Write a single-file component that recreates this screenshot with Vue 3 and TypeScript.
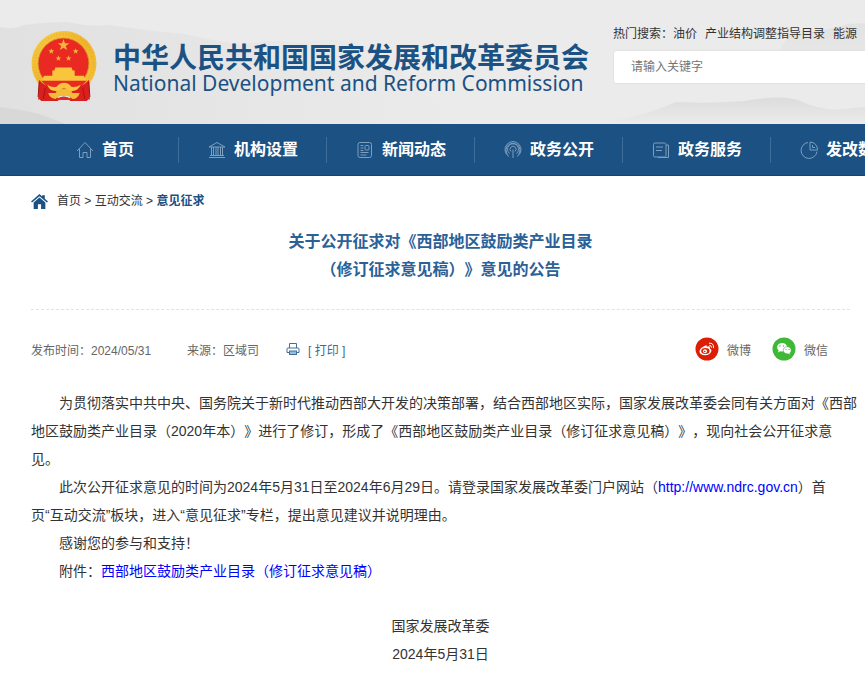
<script setup lang="ts">
import { ref } from 'vue'

interface NavItem {
  label: string
  icon: 'home' | 'bank' | 'news' | 'signal' | 'form' | 'pie'
}

const keyword = ref('')

const hotWords: string[] = ['油价', '产业结构调整指导目录', '能源', '新能源']

const navItems: NavItem[] = [
  { label: '首页', icon: 'home' },
  { label: '机构设置', icon: 'bank' },
  { label: '新闻动态', icon: 'news' },
  { label: '政务公开', icon: 'signal' },
  { label: '政务服务', icon: 'form' },
  { label: '发改数据', icon: 'pie' },
]

const star = (cx: number, cy: number, r: number): string =>
  Array.from({ length: 10 }, (_, i) => {
    const radius = i % 2 ? r * 0.4 : r
    const a = (Math.PI * i) / 5 - Math.PI / 2
    return `${(cx + radius * Math.cos(a)).toFixed(2)},${(cy + radius * Math.sin(a)).toFixed(2)}`
  }).join(' ')

const stars: string[] = [
  star(32, 14, 6),
  star(20, 20, 3),
  star(44, 20, 3),
  star(27, 27, 3),
  star(37, 27, 3),
]

const printPage = (): void => window.print()
</script>

<template>
  <div class="page">
    <header class="header">
      <svg class="hills" viewBox="0 0 865 124" preserveAspectRatio="none" aria-hidden="true">
        <defs>
          <linearGradient id="hill" x1="0" y1="0" x2="0" y2="1">
            <stop offset="0" stop-color="#dcdcdc" />
            <stop offset="1" stop-color="#ebebeb" />
          </linearGradient>
          <linearGradient id="far" x1="0" y1="0" x2="1" y2="0">
            <stop offset="0" stop-color="#dedede" />
            <stop offset="1" stop-color="#ebebeb" />
          </linearGradient>
        </defs>
        <path d="M0 27 Q14 30 24 25 Q45 22 68 22 Q88 27 110 25 Q150 31 185 34 Q220 42 245 45 Q270 38 300 43 Q340 34 375 50 L460 124 L0 124Z" fill="url(#far)" opacity=".8" />
        <path d="M0 107 Q26 110 42 115 L66 124 L0 124Z" fill="#d6d6d6" opacity=".8" />
        <path d="M790 34 Q830 30 848 24 L865 23 L865 80 L760 80Z" fill="url(#hill)" opacity=".6" />
        <path d="M616 120 Q650 114 676 102 Q710 104 745 101 Q785 94 800 101 Q825 112 844 109 L865 107 L865 124 L610 124Z" fill="url(#hill)" />
      </svg>

      <a class="brand" href="#">
        <svg class="emblem" viewBox="0 0 65 69" aria-hidden="true">
          <defs>
            <linearGradient id="gold" x1="0" y1="0" x2="1" y2="1">
              <stop offset="0" stop-color="#f8cf4a" />
              <stop offset=".5" stop-color="#efb52c" />
              <stop offset="1" stop-color="#f6c63c" />
            </linearGradient>
          </defs>
          <circle cx="32.5" cy="32" r="32" fill="url(#gold)" />
          <circle cx="32.5" cy="32" r="29" fill="none" stroke="#dd9b20" stroke-width="3" stroke-dasharray="1 2" opacity=".35" />
          <circle cx="32" cy="32" r="25" fill="#ea2a22" stroke="#d99022" stroke-width=".8" />
          <g fill="#f0b63a"><polygon v-for="(points, i) in stars" :key="i" :points="points" /></g>
          <path d="M24 36h16l1 3h-18zM21 39h22v5h9l3 6H9l4-6h8z" fill="#f8c53c" />
          <path d="M10 49h45l-6 6H16z" fill="#ea2a22" />
          <path d="M8 48q5 7 16 8l3 13H10q-2-3-3-1zM57 48q-5 7-16 8l-3 13h17q2-3 3-1z" fill="#d9201d" />
          <path d="M8 50L7 65M14 56l-2 11M57 50l1 15M51 56l2 11" stroke="#a51517" fill="none" />
          <path d="M16 53q8 5 11 0 2-2 5.500-2t5.500 2q3 5 11 0-3 7-10 6l-6.500-3-6.500 3q-8 1-10-6z" fill="#f7c541" />
          <path d="M24 61q8-6 17 0l7 0q-2 6-7 6l-4-3h-9l-4 3q-6-1-7-6z" fill="#f2bb38" />
          <path d="M25 67q7-5 15 0v1H25z" fill="#e32a20" />
        </svg>
        <span class="brand-text">
          <span class="brand-cn">中华人民共和国国家发展和改革委员会</span>
          <span class="brand-en" lang="en">National Development and Reform Commission</span>
        </span>
      </a>

      <form class="search" role="search" @submit.prevent>
        <p class="hot">
          <span>热门搜索：</span>
          <a v-for="word in hotWords" :key="word" href="#">{{ word }}</a>
        </p>
        <input v-model="keyword" type="text" placeholder="请输入关键字" aria-label="请输入关键字" />
      </form>
    </header>

    <nav class="nav">
      <a v-for="item in navItems" :key="item.label" class="nav-item" href="#">
        <svg class="nav-icon" viewBox="0 0 18 18" aria-hidden="true">
          <g v-if="item.icon === 'home'">
            <path d="M1 10L9 1.500L17 10M3.500 8v8.500h3.500v-5h4v5h3.500V8" />
          </g>
          <g v-else-if="item.icon === 'bank'">
            <path d="M1 6L9 1.500L17 6zM1 16.500h16M2 14.500h14M3.500 6v8M5.500 6v8M8 6v8M10 6v8M12.500 6v8M14.500 6v8" />
          </g>
          <g v-else-if="item.icon === 'news'">
            <rect x="2" y="1.500" width="13.500" height="15" rx="2" />
            <path d="M4.500 4.500h3M4.500 7h3M4.500 9.500h3M4.500 11.500h8M4.500 14h6" />
            <rect x="9" y="4.500" width="4" height="4.500" rx="1" />
          </g>
          <g v-else-if="item.icon === 'signal'">
            <path d="M5 15.500a8 8 0 1 1 8 0M5.500 12.500a5.500 5.500 0 1 1 7 0M7 10.500a3 3 0 1 1 4 0M9 8.500v8.500M3.500 13.500a7 7 0 1 1 11 0" />
          </g>
          <g v-else-if="item.icon === 'form'">
            <rect x="1.500" y="2" width="12.500" height="14" rx="1.500" />
            <path d="M4 6h7M4 9.500h6M14 4h2.500v12.500H6" />
          </g>
          <g v-else>
            <path d="M8 1.500a8 8 0 1 0 9 9M10 1v8h7.500M10 1a7.500 7.500 0 0 1 7.500 8M12.500 4v2.500H15" />
          </g>
        </svg>
        <span>{{ item.label }}</span>
      </a>
    </nav>

    <main class="main">
      <div class="crumbs">
        <svg class="crumb-icon" viewBox="0 0 16 14" aria-hidden="true">
          <path d="M0 7L8 0l2.500 2.200V1h2.500v3.400L16 7l-1 1L8 2 1 8z" />
          <path d="M2.500 8L8 3.300 13.500 8v6h-4V9.500h-3V14h-4z" />
        </svg>
        <span><a href="#">首页</a> &gt; <a href="#">互动交流</a> &gt; <a class="current" href="#">意见征求</a></span>
      </div>

      <h1 class="title">关于公开征求对《西部地区鼓励类产业目录<br />（修订征求意见稿）》意见的公告</h1>

      <div class="meta">
        <span>发布时间：2024/05/31</span>
        <span class="source">来源：区域司</span>
        <button class="print" type="button" @click="printPage">
          <svg viewBox="0 0 14 14" aria-hidden="true">
            <path d="M3.500 6V1.500h7V6M3 10.500H1V7q0-1 1-1h10q1 0 1 1v3.500h-2" />
            <rect x="3.500" y="9" width="7" height="3.500" fill="#9dbbd5" />
          </svg>
          <span>[ 打印 ]</span>
        </button>
        <a class="share weibo" href="#">
          <svg viewBox="0 0 24 24" aria-hidden="true">
            <circle cx="12" cy="12" r="11.500" fill="#dc1e05" />
            <path d="M10.500 8.500q1.500-.6 1.300 1.200 3-1 3.200.8l-.2 1q2.200.7 1.500 3-1.300 3.700-6.300 3.700-5.500-.3-5.500-4 .5-3.500 6-5.700z" fill="#fff" />
            <ellipse cx="10.400" cy="14" rx="4.200" ry="2.900" fill="#dc1e05" />
            <circle cx="10" cy="14.200" r="2" fill="#fff" />
            <circle cx="9.700" cy="14.500" r=".8" fill="#dc1e05" />
            <path d="M14.300 6.200q4.600-.6 4.200 4.500M14.600 8.300q2-.1 1.900 1.900" fill="none" stroke="#fff" stroke-linecap="round" />
          </svg>
          <span>微博</span>
        </a>
        <a class="share" href="#">
          <svg viewBox="0 0 24 24" aria-hidden="true">
            <circle cx="12" cy="12" r="11.500" fill="#3fb837" />
            <path d="M6 15.500l.6-2.200a5 4.300 0 1 1 3 1.200l-1.600-.2z" fill="#fff" />
            <path d="M18.300 17.500l-.4-1.600a4 3.600 0 1 0-2 .9z" fill="#fff" stroke="#3fb837" stroke-width=".6" />
            <g fill="#3fb837"><circle cx="8" cy="9" r=".7" /><circle cx="11.500" cy="9" r=".7" /><circle cx="14" cy="12.500" r=".6" /><circle cx="17" cy="12.500" r=".6" /></g>
          </svg>
          <span>微信</span>
        </a>
      </div>

      <article class="article">
        <p>为贯彻落实中共中央、国务院关于新时代推动西部大开发的决策部署，结合西部地区实际，国家发展改革委会同有关方面对《西部地区鼓励类产业目录（2020年本）》进行了修订，形成了《西部地区鼓励类产业目录（修订征求意见稿）》，现向社会公开征求意见。</p>
        <p>此次公开征求意见的时间为2024年5月31日至2024年6月29日。请登录国家发展改革委门户网站（<a href="http://www.ndrc.gov.cn">http://www.ndrc.gov.cn</a>）首页“互动交流”板块，进入“意见征求”专栏，提出意见建议并说明理由。</p>
        <p>感谢您的参与和支持！</p>
        <p>附件：<a href="#">西部地区鼓励类产业目录（修订征求意见稿）</a></p>
        <div class="signature">
          <span>国家发展改革委</span>
          <span>2024年5月31日</span>
        </div>
      </article>
    </main>
  </div>
</template>

<style>
body {
  margin: 0;
  background: #fff;
}
</style>

<style scoped>
.page {
  overflow: hidden;
  font-family: "Liberation Sans", "Noto Sans CJK SC", sans-serif;
  font-size: 12px;
  color: #333;
  text-spacing-trim: space-all;
}

a {
  color: inherit;
  text-decoration: none;
}

.header {
  position: relative;
  display: flex;
  height: 124px;
  background: #ebebeb;
}

.hills {
  position: absolute;
  inset: 0;
  width: 100%;
  height: 100%;
}

.brand {
  position: relative;
  display: flex;
  flex: none;
  gap: 16px;
  align-items: flex-start;
  width: 582px;
  padding: 31px 0 0 31px;
  color: #1b5183;
  white-space: nowrap;
}

.emblem {
  width: 66px;
  height: 70px;
}

.brand-text {
  display: flex;
  flex-direction: column;
  padding-top: 14px;
}

.brand-cn {
  font-size: 28px;
  font-weight: 700;
  line-height: 28px;
}

.brand-en {
  font-family: "Noto Sans", sans-serif;
  font-size: 21px;
  line-height: 20px;
}

.search {
  position: relative;
  display: flex;
  flex: 1;
  flex-direction: column;
  gap: 6px;
  min-width: 0;
  padding-top: 24px;
}

.hot {
  display: flex;
  gap: 8px;
  margin: 0;
  line-height: 20px;
  white-space: nowrap;
}

.hot span {
  margin-right: -8px;
}

.search input {
  box-sizing: border-box;
  width: 360px;
  height: 34px;
  padding: 0 17px;
  border: 1px solid #e2e2e2;
  border-radius: 3px;
  background: #fff;
  font: inherit;
}

.search input::placeholder {
  color: #757575;
}

.nav {
  display: flex;
  box-sizing: border-box;
  height: 52px;
  padding-left: 31px;
  border-bottom: 1px solid #0f4577;
  background: #1b5183;
  overflow: hidden;
}

.nav-item {
  display: flex;
  flex: none;
  gap: 8px;
  align-items: center;
  justify-content: center;
  box-sizing: border-box;
  width: 148px;
  color: #fff;
  font-size: 16px;
  font-weight: 700;
  line-height: 24px;
  background: linear-gradient(#3f6d98, #3f6d98) right center / 1px 26px no-repeat;
}

.nav-icon {
  width: 18px;
  height: 18px;
  fill: none;
  stroke: #7e9fbd;
}

.main {
  padding: 15px 15px 0 31px;
}

.crumbs {
  display: flex;
  gap: 9px;
  align-items: center;
  line-height: 20px;
}

.crumb-icon {
  width: 17px;
  height: 15px;
  fill: #1b5183;
}

.current {
  color: #1b5183;
  font-weight: 700;
}

.title {
  margin: 17px 0 0;
  padding-bottom: 25px;
  border-bottom: 1px dashed #e2e2e2;
  color: #2b6197;
  font-size: 16px;
  font-weight: 700;
  line-height: 28px;
  text-align: center;
}

.meta {
  display: flex;
  align-items: center;
  height: 24px;
  margin-top: 27px;
  padding-right: 22px;
  color: #666;
}

.source {
  margin-left: 36px;
}

.print {
  display: flex;
  gap: 8px;
  align-items: center;
  margin: 0 auto 0 27px;
  padding: 0;
  border: 0;
  background: none;
  color: #416a91;
  font: inherit;
}

.print svg {
  width: 14px;
  height: 14px;
  fill: none;
  stroke: #416f9b;
}

.share {
  display: flex;
  gap: 8px;
  align-items: center;
}

.share svg {
  width: 24px;
  height: 24px;
}

.weibo {
  margin-right: 21px;
}

.article {
  margin: 28px -8px 0 0;
  font-size: 14px;
  line-height: 28px;
}

.article p {
  margin: 0;
  text-indent: 28px;
}

.article a {
  color: #00f;
}

.signature {
  display: flex;
  flex-direction: column;
  align-items: center;
  padding: 27px 8px 12px 0;
}
</style>
